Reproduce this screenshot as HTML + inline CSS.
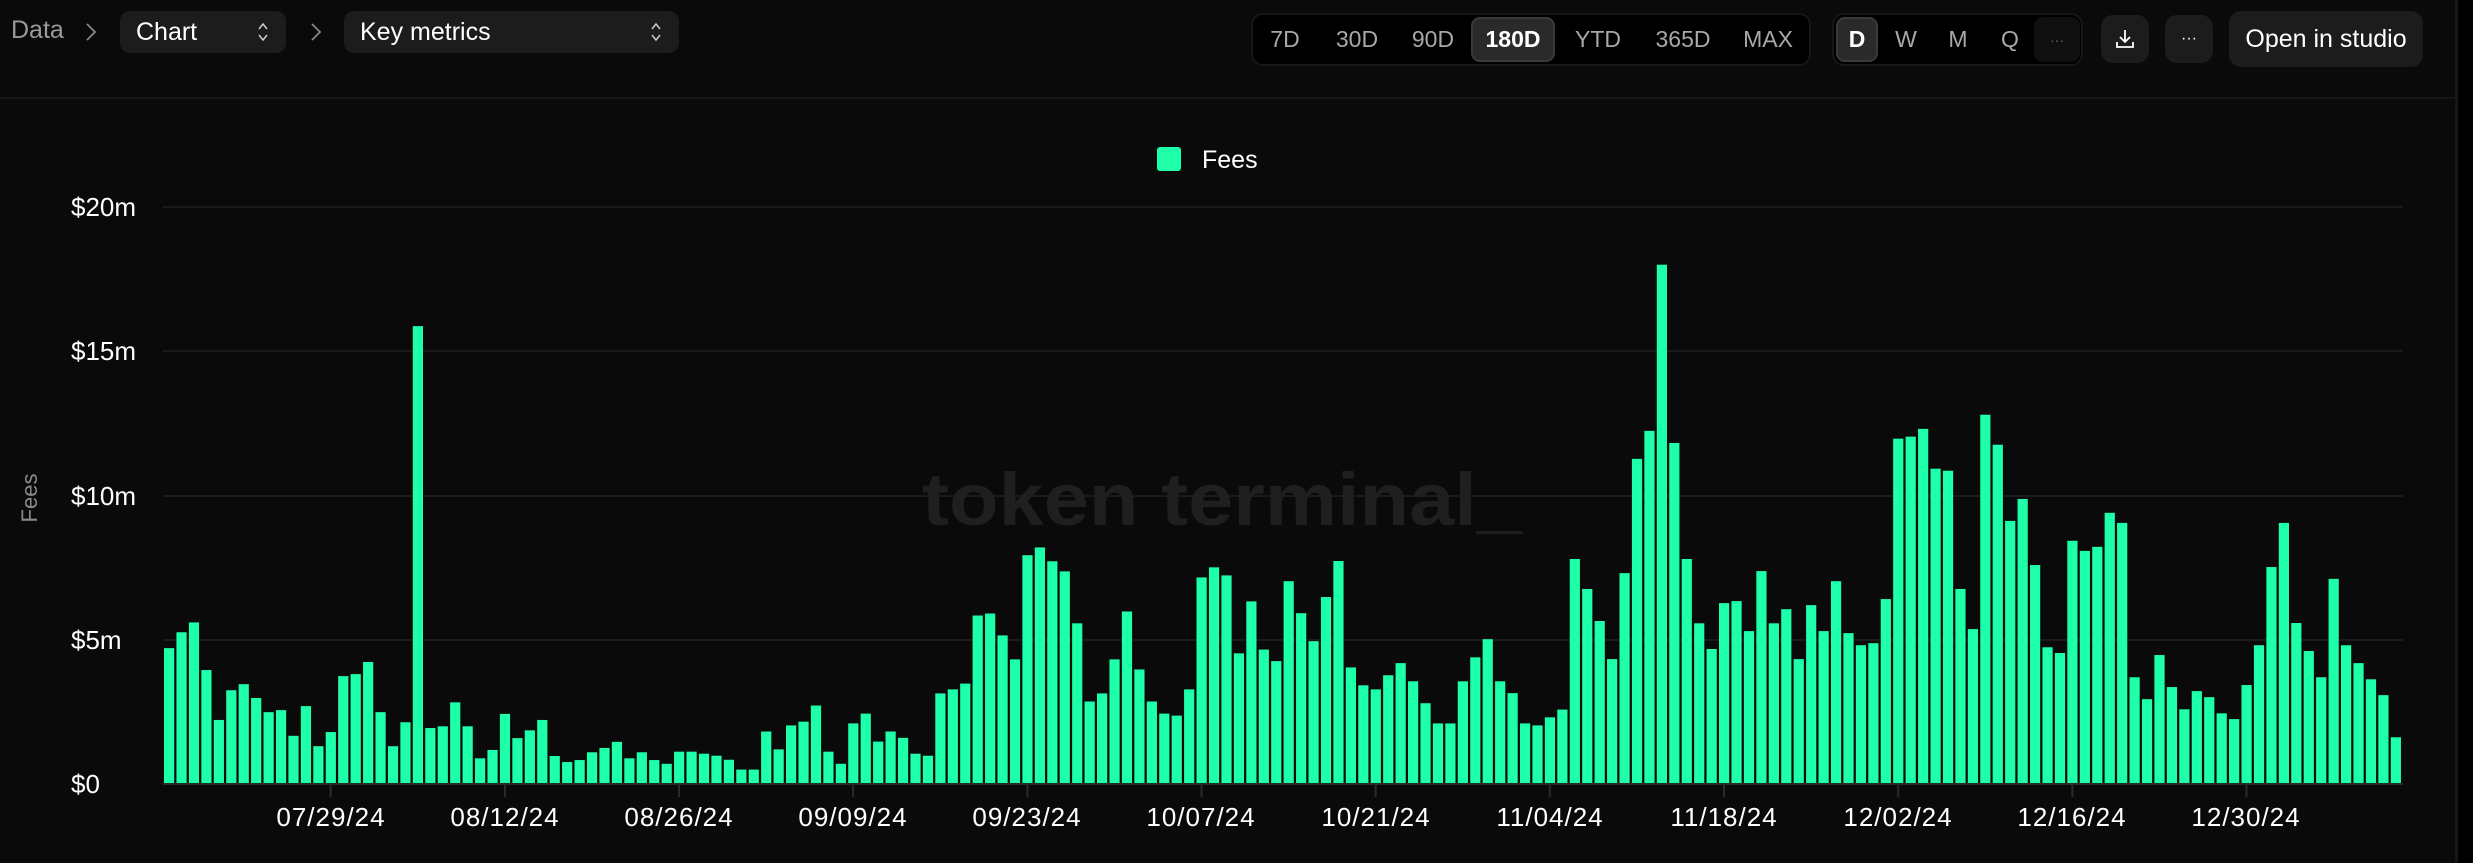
<!DOCTYPE html>
<html><head><meta charset="utf-8">
<style>
*{margin:0;padding:0;box-sizing:border-box}
html,body{width:2473px;height:863px;background:#0a0a0a;overflow:hidden;font-family:"Liberation Sans",sans-serif;color:#fff}
.abs{position:absolute}
.pill{position:absolute;background:#1c1c1c;border-radius:10px;font-size:25px;display:flex;align-items:center;padding-left:16px;color:#fff}
.arrows{position:absolute;right:16px;top:50%;transform:translateY(-50%)}
.grp{position:absolute;background:#000;border:2px solid #161616;border-radius:12px}
.it{position:absolute;top:0;height:100%;display:flex;align-items:center;justify-content:center;font-size:23px;color:#a8a8a8}
.act{background:#2a2a2a;border:2px solid #3a3a3a;border-radius:9px;color:#fff;font-weight:bold}
.btn{position:absolute;background:#1c1c1c;border-radius:12px;display:flex;align-items:center;justify-content:center;color:#fff}
</style></head><body>
<div class="abs" style="left:0;top:0;width:2456px;height:99px;border-bottom:2px solid #161616"></div>
<div class="abs" style="left:2455px;top:0;width:3px;height:863px;background:#161616"></div>
<div class="abs" style="left:2458px;top:0;width:15px;height:863px;background:#000"></div>

<div class="abs" style="left:11px;top:16px;font-size:25px;color:#9a9a9a">Data</div>
<svg class="abs" style="left:84px;top:22px" width="14" height="20"><path d="M3 2 L11 10 L3 18" fill="none" stroke="#888" stroke-width="1.8"/></svg>
<div class="pill" style="left:120px;top:11px;width:166px;height:42px">Chart
<svg class="arrows" width="14" height="22"><path d="M3 8 L7 3 L11 8 M3 14 L7 19 L11 14" fill="none" stroke="#ccc" stroke-width="1.5"/></svg></div>
<svg class="abs" style="left:309px;top:22px" width="14" height="20"><path d="M3 2 L11 10 L3 18" fill="none" stroke="#888" stroke-width="1.8"/></svg>
<div class="pill" style="left:344px;top:11px;width:335px;height:42px">Key metrics
<svg class="arrows" width="14" height="22"><path d="M3 8 L7 3 L11 8 M3 14 L7 19 L11 14" fill="none" stroke="#ccc" stroke-width="1.5"/></svg></div>

<div class="grp" style="left:1251px;top:13px;width:560px;height:53px">
<div class="it" style="left:8px;width:48px">7D</div>
<div class="it" style="left:74px;width:60px">30D</div>
<div class="it" style="left:150px;width:60px">90D</div>
<div class="it act" style="left:218px;top:2px;height:45px;width:84px">180D</div>
<div class="it" style="left:315px;width:60px">YTD</div>
<div class="it" style="left:395px;width:70px">365D</div>
<div class="it" style="left:480px;width:70px">MAX</div>
</div>
<div class="grp" style="left:1832px;top:13px;width:251px;height:53px">
<div class="it act" style="left:2px;top:2px;height:45px;width:42px">D</div>
<div class="it" style="left:52px;width:40px">W</div>
<div class="it" style="left:104px;width:40px">M</div>
<div class="it" style="left:156px;width:40px">Q</div>
<div class="it" style="left:200px;top:2px;height:45px;width:46px;background:#0f0f0f;border-radius:9px;font-size:14px;color:#666">···</div>
</div>
<div class="btn" style="left:2101px;top:15px;width:48px;height:48px">
<svg width="22" height="22"><path d="M11 2 V13 M6 9 L11 14 L16 9 M3 14 V19 H19 V14" fill="none" stroke="#fff" stroke-width="1.8"/></svg></div>
<div class="btn" style="left:2165px;top:15px;width:48px;height:48px;font-size:16px">···</div>
<div class="btn" style="left:2229px;top:11px;width:194px;height:56px;font-size:25px">Open in studio</div>

<svg class="abs" style="left:0;top:0" width="2456" height="863">
<g stroke="#1b1b1b" stroke-width="2">
<line x1="163" y1="207" x2="2403" y2="207"/>
<line x1="163" y1="351" x2="2403" y2="351"/>
<line x1="163" y1="496" x2="2403" y2="496"/>
<line x1="163" y1="640" x2="2403" y2="640"/>
</g>
<text x="922" y="525" font-family="Liberation Sans,sans-serif" font-weight="bold" font-size="74" fill="#1f1f1f" textLength="600" lengthAdjust="spacingAndGlyphs">token terminal_</text>
<rect x="1157" y="147" width="24" height="24" rx="3" fill="#1effa9"/>
<text x="1202" y="168" font-size="25" fill="#fff" font-family="Liberation Sans,sans-serif">Fees</text>
<g font-family="Liberation Sans,sans-serif" font-size="26" fill="#fff">
<text x="71" y="216">$20m</text>
<text x="71" y="360">$15m</text>
<text x="71" y="505">$10m</text>
<text x="71" y="649">$5m</text>
<text x="71" y="793">$0</text>
</g>
<text transform="translate(37,498) rotate(-90)" text-anchor="middle" font-size="22" fill="#8a8a8a" font-family="Liberation Sans,sans-serif">Fees</text>
<g id="bars" fill="#1effa9"></g>
<line x1="163" y1="784" x2="2403" y2="784" stroke="#2a2a2a" stroke-width="2"/>
<g id="ticks" stroke="#2a2a2a" stroke-width="2"></g>
<g id="xl" font-family="Liberation Sans,sans-serif" font-size="26" fill="#fff" text-anchor="middle" letter-spacing="1">
<text x="331" y="826">07/29/24</text>
<text x="505" y="826">08/12/24</text>
<text x="679" y="826">08/26/24</text>
<text x="853" y="826">09/09/24</text>
<text x="1027" y="826">09/23/24</text>
<text x="1201" y="826">10/07/24</text>
<text x="1376" y="826">10/21/24</text>
<text x="1550" y="826">11/04/24</text>
<text x="1724" y="826">11/18/24</text>
<text x="1898" y="826">12/02/24</text>
<text x="2072" y="826">12/16/24</text>
<text x="2246" y="826">12/30/24</text>
</g>
</svg>
<script>
var v=[4.71,5.26,5.6,3.95,2.22,3.25,3.46,2.98,2.49,2.56,1.67,2.7,1.31,1.8,3.74,3.81,4.23,2.49,1.31,2.14,15.87,1.94,2.0,2.83,2.0,0.89,1.18,2.43,1.59,1.86,2.22,0.97,0.76,0.83,1.1,1.25,1.46,0.89,1.1,0.83,0.7,
1.12,1.12,1.05,0.98,0.84,0.5,0.5,1.82,1.2,2.03,2.16,2.72,1.12,0.7,2.1,2.44,1.47,1.82,1.6,1.05,0.98,3.14,3.28,3.48,5.84,5.91,5.15,4.32,7.93,8.2,7.72,7.37,5.57,2.86,3.14,4.32,5.98,3.97,2.86,2.44,2.37,3.28,7.16,7.51,7.23,4.53,6.33,4.66,4.26,
7.03,5.92,4.95,6.48,7.73,4.04,3.42,3.28,3.77,4.19,3.56,2.8,2.1,2.1,3.56,4.39,5.02,3.56,3.15,2.1,2.03,2.31,2.58,7.8,6.76,5.65,4.33,7.31,11.27,12.24,18.0,11.82,7.8,5.57,4.68,6.27,6.34,5.3,7.38,5.57,6.06,4.33,6.2,5.3,7.03,5.23,4.81,
4.88,6.41,11.97,12.04,12.31,10.93,10.86,6.76,5.37,12.8,11.76,9.12,9.88,7.59,4.74,4.54,8.43,8.08,8.22,9.4,9.05,3.7,2.94,4.47,3.36,2.59,3.22,3.01,2.45,2.25,3.43,4.81,7.52,9.05,5.58,4.61,3.7,7.11,4.81,4.19,3.63,3.08,1.62];
var ns="http://www.w3.org/2000/svg",g=document.getElementById("bars"),t=document.getElementById("ticks");
for(var i=0;i<v.length;i++){var r=document.createElementNS(ns,"rect");var h=v[i]*28.85;r.setAttribute("x",(164+i*12.44).toFixed(2));r.setAttribute("y",(784-h).toFixed(2));r.setAttribute("width","10.2");r.setAttribute("height",h.toFixed(2));g.appendChild(r);}
for(var k=0;k<12;k++){var x=(163+(13+14*k)*12.44+6).toFixed(1);var l=document.createElementNS(ns,"line");l.setAttribute("x1",x);l.setAttribute("x2",x);l.setAttribute("y1","785");l.setAttribute("y2","797");t.appendChild(l);}
</script>
</body></html>
